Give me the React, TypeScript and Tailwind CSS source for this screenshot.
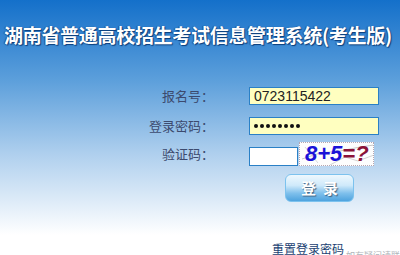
export default function App() {
  return (
    <div className="w-[400px] h-[255px] overflow-hidden bg-[linear-gradient(to_bottom,#1470ca_0px,#5c9fdb_80px,#b0d0ee_155px,#ffffff_235px)] font-['Noto_Sans_CJK_SC',sans-serif]">
      {/* Title */}
      <h1 className="pt-[22px] pl-[4px] text-[19px] leading-[26px] font-bold text-white tracking-[-0.3px] whitespace-nowrap [text-shadow:1px_1px_1px_#0b3d7a,-1px_0_1px_#1a4f8a]">
        湖南省普通高校招生考试信息管理系统(考生版)
      </h1>

      {/* Form */}
      <div className="mt-[39px] flex flex-col text-[13px] text-[#3c4a6e]">
        <div className="flex items-center h-[18px]">
          <span className="w-[214px] text-right">报名号：</span>
          <div className="ml-[35px] w-[130px] h-[18px] border border-[#2a80c6] bg-[#ffffc0] px-[4px] flex items-center text-[14px] text-[#222] font-['Liberation_Sans',sans-serif]">
            0723115422
          </div>
        </div>

        <div className="mt-[12px] flex items-center h-[18px]">
          <span className="w-[214px] text-right">登录密码：</span>
          <div className="ml-[35px] w-[130px] h-[18px] border border-[#2a80c6] bg-[#ffffc0] px-[4px] flex items-center gap-[2px]">
            {Array.from({ length: 8 }).map((_, i) => (
              <span key={i} className="w-[4px] h-[4px] rounded-full bg-[#111]" />
            ))}
          </div>
        </div>

        <div className="mt-[7px] flex items-end h-[24px]">
          <span className="w-[214px] text-right self-center">验证码：</span>
          <div className="ml-[35px] w-[49px] h-[19px] border border-[#2a80c6] bg-white" />
          <div className="ml-[1px] relative w-[75px] h-[24px] border border-dotted border-[#b7a6b0] bg-[#fdfdfd] overflow-hidden">
            <svg className="absolute inset-0" width="75" height="24" viewBox="0 0 75 24">
              <path d="M2 16 L20 10 L40 8 L60 4 L74 2" stroke="#bbb" strokeWidth="0.8" fill="none" />
              <path d="M30 22 L45 14 L58 18 L74 12" stroke="#c8c8c8" strokeWidth="0.8" fill="none" />
              <path d="M5 4 L18 20" stroke="#d0d0d0" strokeWidth="0.8" fill="none" />
            </svg>
            <div className="relative pl-[5px] leading-[22px] text-[22px] font-bold italic font-['Liberation_Sans',sans-serif]">
              <span className="text-[#1a12d8]">8+5</span>
              <span className="text-[#8a1238]">=?</span>
            </div>
          </div>
        </div>

        <div className="mt-[8px] pl-[285px]">
          <button className="w-[69px] h-[28px] rounded-[6px] border border-[#7cc2ee] bg-[linear-gradient(to_bottom,#eef8fe_0%,#cfe9fa_40%,#7fc0ec_70%,#4ea3de_100%)] text-white text-[15px] font-bold tracking-[7px] pl-[7px] [text-shadow:1px_1px_1px_#3a5f80]">
            登录
          </button>
        </div>

        <div className="mt-[39px] pl-[272px] flex items-end whitespace-nowrap">
          <span className="text-[12px] leading-[16px] text-[#1b3f72]">重置登录密码</span>
          <span className="ml-[2px] text-[9px] leading-[10px] text-[#b0b4ba] translate-y-[4px]">如有疑问请联系</span>
        </div>
      </div>
    </div>
  );
}
